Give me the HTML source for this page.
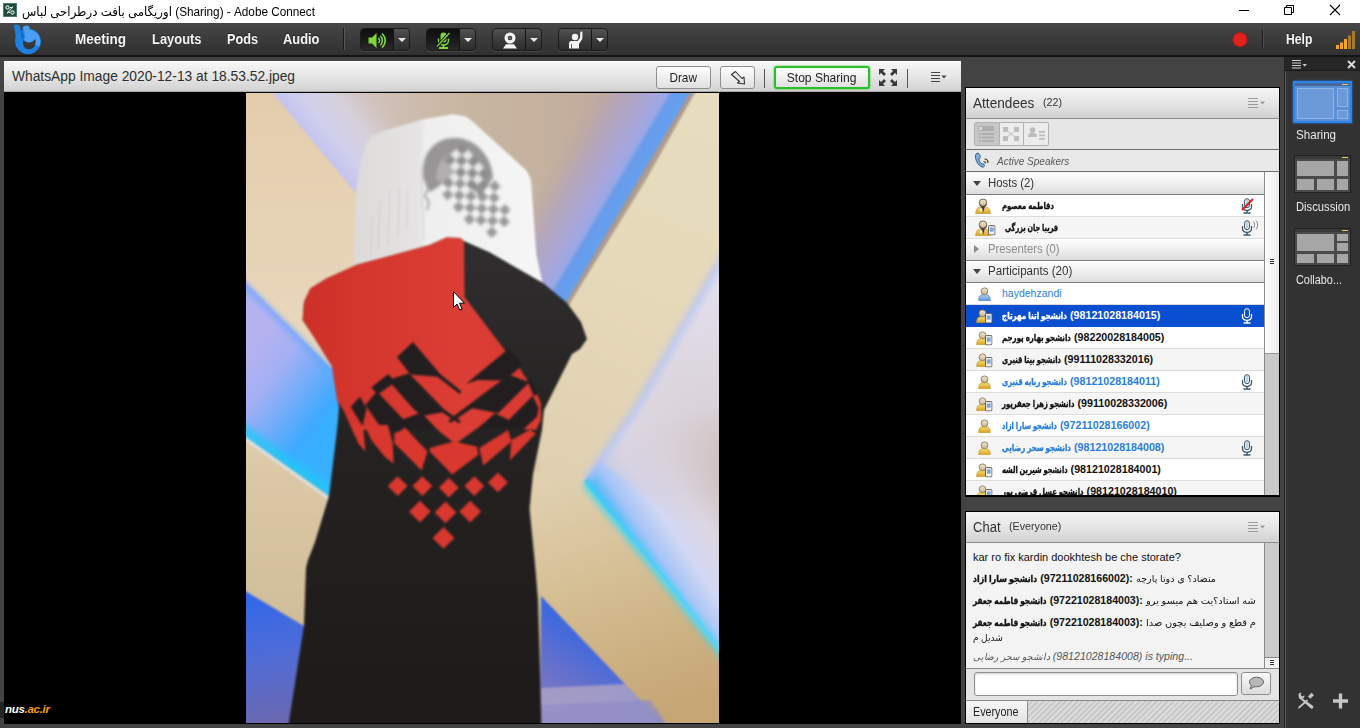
<!DOCTYPE html>
<html lang="fa">
<head>
<meta charset="utf-8">
<title>Adobe Connect</title>
<style>
*{box-sizing:border-box;margin:0;padding:0}
html,body{width:1360px;height:728px;overflow:hidden;background:#434343;font-family:"Liberation Sans","DejaVu Sans",sans-serif;}
.abs{position:absolute}
.sx{display:inline-block;transform-origin:0 50%;white-space:nowrap}
#titlebar{left:0;top:0;width:1360px;height:23px;background:#fff;}
#titlebar .t{left:22px;top:4px;font-size:12.5px;color:#000;white-space:nowrap;direction:ltr}
#menubar{left:0;top:23px;width:1360px;height:34px;background:linear-gradient(#474747,#3d3d3d 40%,#303030);border-bottom:2px solid #141414}
.menu{color:#f4f4f4;font-weight:bold;font-size:14px;top:31px;white-space:nowrap;text-shadow:0 -1px 0 rgba(0,0,0,.5)}
.tbtn{top:28px;height:23px;width:50px;border-radius:4px;background:linear-gradient(#525252,#3c3c3c 50%,#2d2d2d);border:1px solid #1b1b1b;box-shadow:0 1px 0 rgba(255,255,255,.10)}
.tbtn .l{left:0;top:0;width:33px;height:21px;border-right:1px solid #151515;border-radius:3px 0 0 3px}
.tbtn .l.on{background:linear-gradient(#0e0e0e,#1c1c1c 60%,#2a2a2a)}
.tbtn .arr{left:37px;top:9px;width:0;height:0;border-left:4px solid transparent;border-right:4px solid transparent;border-top:4.5px solid #e8e8e8}
#sharepod{left:4px;top:61px;width:957px;height:663px;background:#000;}
#sharehead{left:0;top:0;width:957px;height:31px;background:linear-gradient(#f7f7f7,#e6e6e6 50%,#d2d2d2);border-bottom:1px solid #a9a9a9;border-top:1px solid #fff}
#sharehead .ttl{left:8px;top:7px;font-size:13.8px;color:#2e2e2e;white-space:nowrap}
.btn{height:23px;top:4px;border:1px solid #8e8e8e;border-radius:3px;background:linear-gradient(#ffffff,#ececec 60%,#e0e0e0);font-size:13px;color:#222;text-align:center;line-height:21px}
.vsep{width:1px;background:#555;top:7px;height:19px}
.pod{background:#f2f2f2;border:1px solid #1e1e1e;overflow:hidden}
.podhead{left:0;top:0;width:100%;height:31px;background:linear-gradient(#f4f4f4,#e6e6e6 50%,#d0d0d0);border-bottom:1px solid #8c8c8c}
.podhead .pt{left:7px;top:7px;font-size:14px;color:#333;white-space:nowrap}
.podhead .pc{top:8px;font-size:11.5px;color:#333;white-space:nowrap}
.podmenu{top:9px;width:18px;height:12px}
.ghead{left:0;width:298px;height:22px;background:linear-gradient(#ffffff,#ededed 55%,#dcdcdc);border-bottom:1px solid #7d7d7d;font-size:12.5px;color:#333;padding:3px 0 0 22px;white-space:nowrap}
.ghead.dim{color:#8a8a8a}
.tri{position:absolute;left:7px;top:8px;width:0;height:0;border-left:4px solid transparent;border-right:4px solid transparent;border-top:5px solid #444}
.trir{position:absolute;left:8px;top:6px;width:0;height:0;border-top:4px solid transparent;border-bottom:4px solid transparent;border-left:5px solid #8a8a8a}
.row{left:0;width:298px;height:22px;background:#fff;border-bottom:1px solid #dcdcdc;font-size:10.5px;font-weight:bold;color:#111;white-space:nowrap}
.row.alt{background:#f5f5f5}
.row.sel{background:#0a4fd0;color:#fff;border-bottom-color:#0a4fd0}
.row.blue{color:#2a7fd8}
.row .nm{position:absolute;left:36px;top:4px;direction:ltr;unicode-bidi:normal}
.row svg.ic{position:absolute;left:12px;top:4px}
.row svg.ic.wp{left:10px}
.row svg.ph{position:absolute;left:19px;top:8px}
.row svg.mc{position:absolute;left:275px;top:3px}
#rightbar{left:1284px;top:57px;width:76px;height:671px;background:#323232;border-left:1px solid #222;box-shadow:inset 1px 0 0 #5a5a5a}
#rightbar .hd{left:0;top:0;width:75px;height:14px;background:#262626;border-bottom:1px solid #1b1b1b}
.lay{left:9px;width:57px;height:38px;border:1px solid #202020;background:#4a4a4a}
.lay i{position:absolute;background:#a6a6a6;display:block}
.laylbl{left:0;width:75px;text-align:center;color:#e8e8e8;font-size:12.5px;white-space:nowrap}
.chat{font-size:11.5px;color:#111;white-space:nowrap;left:7px}
.chat b{font-weight:bold}
.fa{display:inline-block;transform-origin:0 50%;white-space:nowrap;font-size:9.5px;vertical-align:baseline;overflow:visible}
.num{margin-left:3px}
.row .fa,.chat b .fa{-webkit-text-stroke:.35px currentColor}
.chat b+.fa{margin-left:3px}
.row .num{font-size:10.7px}
.chat .num{font-size:10.6px}
</style>
</head>
<body>
<svg width="0" height="0" style="position:absolute">
<defs>
<linearGradient id="gy" x1="0" y1="0" x2="0" y2="1"><stop offset="0" stop-color="#f7dc7a"/><stop offset="1" stop-color="#d9a520"/></linearGradient>
<linearGradient id="gh" x1="0" y1="0" x2="0" y2="1"><stop offset="0" stop-color="#f3ead6"/><stop offset="1" stop-color="#c9b48c"/></linearGradient>
<linearGradient id="gb" x1="0" y1="0" x2="0" y2="1"><stop offset="0" stop-color="#b7d2f2"/><stop offset="1" stop-color="#5f98dc"/></linearGradient>
<symbol id="iuser" viewBox="0 0 13 14"><path d="M.6,13.500 L1.200,9.800 C2,8.200 4,7.600 6.500,7.600 C9,7.600 11,8.200 11.800,9.800 L12.400,13.500 Z" fill="url(#gy)" stroke="#c8962a" stroke-width=".7"/><circle cx="6.500" cy="4.300" r="3.400" fill="url(#gh)" stroke="#8c7c60" stroke-width=".9"/></symbol>
<symbol id="iuserb" viewBox="0 0 13 14"><path d="M.6,13.500 L1.200,9.800 C2,8.200 4,7.600 6.500,7.600 C9,7.600 11,8.200 11.800,9.800 L12.400,13.500 Z" fill="url(#gb)" stroke="#4a80c8" stroke-width=".7"/><circle cx="6.500" cy="4.300" r="3.400" fill="url(#gh)" stroke="#8c7c60" stroke-width=".9"/></symbol>
<symbol id="ihost" viewBox="0 0 16 16"><path d="M.6,15.500 L1.400,11.500 C2.500,9.500 5,8.800 8,8.800 C11,8.800 13.500,9.500 14.600,11.500 L15.400,15.500 Z" fill="url(#gy)" stroke="#c8962a" stroke-width=".7"/><path d="M6.300,9 L8,15 L9.700,9 Z" fill="#3a3a3a"/><path d="M5,10.500 h2.500 v3 h-2.500 Z" fill="#fff" opacity=".7"/><circle cx="8" cy="4.800" r="3.800" fill="url(#gh)" stroke="#6c5c44" stroke-width=".9"/><path d="M4.600,5.500 Q8,10.500 11.400,5.500 L11.200,7.500 Q8,11.500 4.800,7.500 Z" fill="#4a4038"/></symbol>
<symbol id="iphone" viewBox="0 0 8 11"><rect x=".5" y=".5" width="7" height="10" rx="1.200" fill="#f0f0f0" stroke="#555" stroke-width="1"/><rect x="2" y="2.500" width="4" height="4.500" fill="#7aa6d8"/></symbol>
<symbol id="imic" viewBox="0 0 12 16"><rect x="3.500" y=".7" width="5" height="9" rx="2.500" fill="#dfe8ee" stroke="#3c5a6e" stroke-width="1"/><path d="M1.500,6 L1.500,8.500 C1.500,11.500 4,12.300 6,12.300 C8,12.300 10.500,11.500 10.500,8.500 L10.500,6" fill="none" stroke="#3c5a6e" stroke-width="1.300"/><path d="M6,12.300 L6,14.500 M2.500,15 L9.500,15" stroke="#3c5a6e" stroke-width="1.500" fill="none"/><path d="M5,3 L7,3 M5,5 L7,5 M5,7 L7,7" stroke="#8aa0ae" stroke-width=".7"/></symbol>
<symbol id="imicw" viewBox="0 0 12 16"><rect x="3.500" y=".7" width="5" height="9" rx="2.500" fill="#0a4fd0" stroke="#ffffff" stroke-width="1"/><path d="M1.500,6 L1.500,8.500 C1.500,11.500 4,12.300 6,12.300 C8,12.300 10.500,11.500 10.500,8.500 L10.500,6" fill="none" stroke="#ffffff" stroke-width="1.300"/><path d="M6,12.300 L6,14.500 M2.500,15 L9.500,15" stroke="#ffffff" stroke-width="1.500" fill="none"/></symbol>
<symbol id="ipodmenu" viewBox="0 0 18 12"><path d="M0,1.500 H10 M0,4.500 H10 M0,7.500 H10 M0,10.500 H10" stroke="#9a9a9a" stroke-width="1.200"/><path d="M12,4.500 L17,4.500 L14.500,7.500 Z" fill="#9a9a9a"/></symbol>
</defs>
</svg>

<div id="titlebar" class="abs">
  <svg class="abs" style="left:3px;top:3px" width="14" height="14" viewBox="0 0 14 14"><rect width="14" height="14" fill="#1e4b3d"/><rect x=".5" y=".5" width="13" height="13" fill="none" stroke="#4d7a69" stroke-width="1"/><circle cx="4.500" cy="4.500" r="1.600" fill="none" stroke="#cfe6dc" stroke-width="1.100"/><circle cx="9.500" cy="9.500" r="1.600" fill="none" stroke="#cfe6dc" stroke-width="1.100"/><path d="M10,3.500 L4,10.500 M6.500,4.500 H10 M4,9.500 H7" stroke="#cfe6dc" stroke-width="1.100" fill="none"/></svg>
  <div class="abs t"><span class="sx" id="ttxt" style="transform:scaleX(0.94)">اوریگامی بافت درطراحی لباس (Sharing) - Adobe Connect</span></div>
  <svg class="abs" style="left:1230px;top:0" width="130" height="23" viewBox="1230 0 130 23"><path d="M1239,10.500 H1249" stroke="#000" stroke-width="1"/><path d="M1284.500,7.500 H1291.500 V14.500 H1284.500 Z M1286.500,7.500 V5.500 H1293.500 V12.500 H1291.500" fill="none" stroke="#000" stroke-width="1"/><path d="M1330,5 L1340,15 M1340,5 L1330,15" stroke="#000" stroke-width="1.100"/></svg>
</div>
<div id="menubar" class="abs"></div>
<svg class="abs" style="left:10px;top:23px" width="36" height="33" viewBox="10 23 36 33">
  <path d="M13.500,25.500 C16,24.300 19,24.800 20.200,26.800 L21,36 L15.500,41 C15.800,35 15.300,30 13.500,25.500 Z" fill="#1f7fe2"/>
  <path fill-rule="evenodd" d="M28,28.500 a12.900,12.900 0 1 0 0.010,0 Z M23.500,39.500 C26,43.500 32,43.500 35.200,38.800 C37,43 35,48.800 29.500,49.200 C24.500,49.500 22,44.500 23.500,39.500 Z" fill="#1f7fe2"/>
  <path d="M22.500,28 C23.500,25.300 27.500,24.500 29.200,26.600 C29.800,27.500 29.600,28.600 29.100,29.400 C35,30 40,34.500 40.300,41 C40.400,43 40,45 39.300,46.500 L34.800,44.500 C36,42.500 36,40.500 35.200,38.800 C32,43.200 26.500,43.500 23.500,39.500 C25.500,36 25,31.500 22.500,28 Z" fill="#4a9ef4"/>
  <path d="M20.200,26.800 L25,38 L23.500,39.500 C22,38.500 21.200,37.300 21,36 Z" fill="#1766c2" opacity=".85"/>
</svg>
<div class="abs menu" style="left:75px"><span class="sx" id="m1" style="transform:scaleX(0.964)">Meeting</span></div>
<div class="abs menu" style="left:152px"><span class="sx" id="m2" style="transform:scaleX(0.922)">Layouts</span></div>
<div class="abs menu" style="left:227px"><span class="sx" id="m3" style="transform:scaleX(0.906)">Pods</span></div>
<div class="abs menu" style="left:283px"><span class="sx" id="m4" style="transform:scaleX(0.92)">Audio</span></div>
<div class="abs" style="left:343px;top:28px;width:1px;height:22px;background:#1a1a1a"></div>
<div class="abs" style="left:344px;top:28px;width:1px;height:22px;background:#555"></div>

<div class="abs tbtn" style="left:360px"><div class="abs l on"></div><div class="abs arr"></div>
  <svg class="abs" style="left:7px;top:3px" width="19" height="17" viewBox="0 0 19 17"><path d="M0.500,5.500 H4 L8.500,1 V16 L4,11.500 H0.500 Z" fill="#7ed63c"/><path d="M10.500,6 C11.800,7.500 11.800,9.500 10.500,11" stroke="#7ed63c" stroke-width="1.500" fill="none"/><path d="M12.300,3.800 C15,6.500 15,10.500 12.300,13.200" stroke="#7ed63c" stroke-width="1.600" fill="none"/><path d="M14,1.500 C18.300,5.500 18.300,11.500 14,15.500" stroke="#7ed63c" stroke-width="1.600" fill="none"/></svg>
</div>
<div class="abs tbtn" style="left:426px"><div class="abs l on"></div><div class="abs arr"></div>
  <svg class="abs" style="left:9px;top:3px" width="15" height="17" viewBox="0 0 15 17"><rect x="4.500" y=".5" width="6" height="10" rx="3" fill="#7ed63c"/><path d="M2.500,6.500 V8.500 C2.500,11.500 5,13 7.500,13 C10,13 12.500,11.500 12.500,8.500 V6.500" stroke="#7ed63c" stroke-width="1.400" fill="none"/><path d="M7.500,13 V15 M3,16 H12 " stroke="#7ed63c" stroke-width="1.800" fill="none"/><path d="M1,14.500 L13.500,1" stroke="#161616" stroke-width="3.200"/><path d="M1,14.500 L13.500,1" stroke="#7ed63c" stroke-width="1.300"/></svg>
</div>
<div class="abs tbtn" style="left:492px"><div class="abs l"></div><div class="abs arr"></div>
  <svg class="abs" style="left:9px;top:3px" width="16" height="17" viewBox="0 0 16 17"><circle cx="8" cy="6" r="5.500" fill="#f4f4f4"/><circle cx="8" cy="6" r="2.300" fill="#3a3a3a"/><circle cx="8" cy="6" r="1" fill="#888"/><path d="M4,12.300 H12 L15,16.500 H1 Z" fill="#f4f4f4"/></svg>
</div>
<div class="abs tbtn" style="left:558px"><div class="abs l"></div><div class="abs arr"></div>
  <svg class="abs" style="left:9px;top:2px" width="16" height="18" viewBox="0 0 16 18"><circle cx="7" cy="6" r="3.200" fill="#f4f4f4"/><path d="M1,17.500 V12.500 C1,10.500 2.500,10 4,10 H9.500 L12,7 L12.300,1.500 C12.300,.3 14.500,.3 14.500,1.500 L14.300,8 L11,13 V17.500 Z" fill="#f4f4f4"/><path d="M3.500,13 V17.500" stroke="#3a3a3a" stroke-width=".8"/></svg>
</div>

<svg class="abs" style="left:1230px;top:26px" width="130" height="28" viewBox="1230 26 130 28">
  <circle cx="1240" cy="39.700" r="7.200" fill="#e0221f"/><circle cx="1240" cy="39.700" r="7.200" fill="none" stroke="#a01414" stroke-width=".8"/>
  <path d="M1262.500,30 V49" stroke="#1c1c1c" stroke-width="1"/><path d="M1263.500,30 V49" stroke="#4d4d4d" stroke-width="1"/>
  <rect x="1336" y="45" width="3" height="4" fill="#f5a623"/><rect x="1340" y="42.500" width="3" height="6.500" fill="#f5a623"/><rect x="1344" y="39" width="3" height="10" fill="#f5a623"/><rect x="1348" y="35.500" width="3" height="13.500" fill="#a97a2e"/><rect x="1352" y="31" width="3" height="18" fill="#a97a2e"/>
</svg>
<div class="abs menu" style="left:1286px"><span class="sx" id="m5" style="transform:scaleX(0.868)">Help</span></div>

<div id="sharepod" class="abs">
  <div id="sharehead" class="abs">
    <div class="abs ttl"><span class="sx" id="sttl">WhatsApp Image 2020-12-13 at 18.53.52.jpeg</span></div>
    <div class="abs btn" style="left:652px;width:55px"><span class="sx" id="bdraw" style="transform-origin:50% 50%;transform:scaleX(0.907)">Draw</span></div>
    <div class="abs btn" style="left:716px;width:35px"><svg width="18" height="16" viewBox="0 0 18 16" style="margin-top:3px"><path d="M2.500,4.500 L6.500,1.500 L13,8.500 L15,7 L15.500,14 L8.500,13 L10.500,11.500 Z" fill="#e8e8e8" stroke="#333" stroke-width="1.100" stroke-linejoin="round"/></svg></div>
    <div class="abs vsep" style="left:760px"></div>
    <div class="abs btn" style="left:770px;width:96px;border:2px solid #27c227;line-height:19px;box-shadow:0 0 2px #27c227"><span class="sx" id="bstop" style="transform-origin:50% 50%;transform:scaleX(0.927)">Stop Sharing</span></div>
    <svg class="abs" style="left:875px;top:7px" width="18" height="17" viewBox="0 0 18 17"><g fill="#3a3a3a"><path d="M0,0 H6 L4,2 L7,5 L5,7 L2,4 L0,6 Z"/><path d="M18,0 V6 L16,4 L13,7 L11,5 L14,2 L12,0 Z"/><path d="M0,17 V11 L2,13 L5,10 L7,12 L4,15 L6,17 Z"/><path d="M18,17 H12 L14,15 L11,12 L13,10 L16,13 L18,11 Z"/></g></svg>
    <div class="abs vsep" style="left:903px"></div>
    <svg class="abs" style="left:927px;top:9px" width="16" height="12" viewBox="0 0 16 12"><path d="M0,1.500 H9 M0,4.500 H9 M0,7.500 H9 M0,10.500 H9" stroke="#444" stroke-width="1.200"/><path d="M10.500,4.500 L15.500,4.500 L13,7.500 Z" fill="#444"/></svg>
  </div>
  <div class="abs" style="left:1px;top:642px;font-size:11.5px;font-weight:bold;font-style:italic;color:#fff;letter-spacing:-.3px;white-space:nowrap">nus<span style="color:#f59a1a">.ac.ir</span></div>
</div>
<div class="abs" style="left:0;top:702px;width:4px;height:16px;background:#242424"></div>
<svg class="abs" id="photo" style="left:246px;top:93px" width="473" height="630" viewBox="246 93 473 630">
<defs>
<filter id="b1" color-interpolation-filters="sRGB" x="-5%" y="-5%" width="110%" height="110%"><feGaussianBlur stdDeviation="0.9"/></filter>
<filter id="b3" color-interpolation-filters="sRGB" x="-20%" y="-20%" width="140%" height="140%"><feGaussianBlur stdDeviation="3"/></filter>
<filter id="b6" color-interpolation-filters="sRGB" x="-30%" y="-30%" width="160%" height="160%"><feGaussianBlur stdDeviation="6"/></filter>
<filter id="b12" color-interpolation-filters="sRGB" x="-40%" y="-40%" width="180%" height="180%"><feGaussianBlur stdDeviation="12"/></filter>
<linearGradient id="gTop" gradientUnits="userSpaceOnUse" x1="300" y1="93" x2="700" y2="93">
 <stop offset="0" stop-color="#d4c8c8"/><stop offset=".2" stop-color="#d0c0b8"/><stop offset=".4" stop-color="#c9b7a1"/><stop offset=".65" stop-color="#c4b09e"/><stop offset=".78" stop-color="#c0a8a0"/><stop offset="1" stop-color="#b8a4a0"/>
</linearGradient>
<linearGradient id="gBand" gradientUnits="userSpaceOnUse" x1="548.6" y1="122.4" x2="645.8" y2="180">
 <stop offset="0.2" stop-color="#b8a4a8" stop-opacity="0"/><stop offset=".45" stop-color="#b0a4c4" stop-opacity=".75"/><stop offset=".68" stop-color="#a8a6dc"/><stop offset=".775" stop-color="#9aa8e6"/><stop offset=".81" stop-color="#6a9aea"/><stop offset=".935" stop-color="#64a0f0"/><stop offset=".95" stop-color="#a8978c"/><stop offset="1" stop-color="#b4a494"/>
</linearGradient>
<linearGradient id="gLav" gradientUnits="userSpaceOnUse" x1="316" y1="145" x2="377.6" y2="93.9">
 <stop offset="0" stop-color="#c2c4ee"/><stop offset=".25" stop-color="#d0d0ee" stop-opacity=".97"/><stop offset=".6" stop-color="#d8d4e4" stop-opacity=".75"/><stop offset="1" stop-color="#d4c8c8" stop-opacity="0"/>
</linearGradient>
<linearGradient id="gBlueL" gradientUnits="userSpaceOnUse" x1="250" y1="350" x2="338" y2="420">
 <stop offset="0" stop-color="#b6b2f0"/><stop offset=".3" stop-color="#a4b0f4"/><stop offset=".6" stop-color="#6eacfa"/><stop offset=".85" stop-color="#3eaaff"/><stop offset="1" stop-color="#38b0ff"/>
</linearGradient>
<linearGradient id="gBlueL2" gradientUnits="userSpaceOnUse" x1="246" y1="600" x2="270" y2="723">
 <stop offset="0" stop-color="#3468e8"/><stop offset=".45" stop-color="#4e6cd8"/><stop offset="1" stop-color="#6a68b0"/>
</linearGradient>
<linearGradient id="gPanel" gradientUnits="userSpaceOnUse" x1="600" y1="520" x2="719" y2="440">
 <stop offset="0" stop-color="#30d0f4"/><stop offset=".08" stop-color="#4cb4f6"/><stop offset=".2" stop-color="#a4c4f6"/><stop offset=".38" stop-color="#d4d8f4"/><stop offset=".6" stop-color="#dcd6e2"/><stop offset=".85" stop-color="#cfc0bc"/><stop offset="1" stop-color="#c8b4a6"/>
</linearGradient>
<linearGradient id="gPanelTop" gradientUnits="userSpaceOnUse" x1="670" y1="300" x2="719" y2="520">
 <stop offset="0" stop-color="#e2deea"/><stop offset=".5" stop-color="#dcd6e0" stop-opacity=".9"/><stop offset="1" stop-color="#d0c4c8" stop-opacity="0"/>
</linearGradient>
<linearGradient id="gTan" gradientUnits="userSpaceOnUse" x1="560" y1="480" x2="640" y2="720">
 <stop offset="0" stop-color="#e0d0b0"/><stop offset=".4" stop-color="#d6c096"/><stop offset="1" stop-color="#c6a675"/>
</linearGradient>
<linearGradient id="gBlueR" gradientUnits="userSpaceOnUse" x1="600" y1="640" x2="545" y2="723">
 <stop offset="0" stop-color="#3a68e0"/><stop offset=".4" stop-color="#5f6fd0"/><stop offset="1" stop-color="#8a7cb8"/>
</linearGradient>
<linearGradient id="gPaper" gradientUnits="userSpaceOnUse" x1="355" y1="200" x2="540" y2="200">
 <stop offset="0" stop-color="#dddad9"/><stop offset=".35" stop-color="#e6e4e4"/><stop offset=".38" stop-color="#efefef"/><stop offset="1" stop-color="#f6f6f6"/>
</linearGradient>
<linearGradient id="gLeftWall" gradientUnits="userSpaceOnUse" x1="246" y1="93" x2="246" y2="723">
 <stop offset="0" stop-color="#e4cdae"/><stop offset=".45" stop-color="#ead9be"/><stop offset=".6" stop-color="#dcc8a6"/><stop offset="1" stop-color="#c9b690"/>
</linearGradient>
<linearGradient id="gRightWall" gradientUnits="userSpaceOnUse" x1="719" y1="93" x2="560" y2="480">
 <stop offset="0" stop-color="#e7debf"/><stop offset=".5" stop-color="#e6d9ba"/><stop offset="1" stop-color="#e0d0b2"/>
</linearGradient>
<linearGradient id="gDress" gradientUnits="userSpaceOnUse" x1="420" y1="240" x2="420" y2="723">
 <stop offset="0" stop-color="#302e2e"/><stop offset=".4" stop-color="#252222"/><stop offset="1" stop-color="#1e1a1a"/>
</linearGradient>
<linearGradient id="gRed" gradientUnits="userSpaceOnUse" x1="300" y1="330" x2="520" y2="330">
 <stop offset="0" stop-color="#cc3028"/><stop offset=".25" stop-color="#d4352c"/><stop offset=".75" stop-color="#dc3e35"/><stop offset="1" stop-color="#d93a31"/>
</linearGradient>
</defs>
<g filter="url(#b1)">
<rect x="240" y="88" width="485" height="640" fill="url(#gLeftWall)"/>
<polygon points="560,88 725,88 725,728 540,728 540,300" fill="url(#gRightWall)" />
<polygon points="268.5,88 272.9,93 359.8,197.7 380,320 560,320 574.6,295.4 645.8,180 694.7,93 697.5,88" fill="url(#gTop)" />
<polygon points="268.5,88 272.9,93 359.8,197.7 380,320 480,320 480,88" fill="url(#gLav)" />
<polygon points="480,88 697.5,88 694.7,93 645.8,180 574.6,295.4 560,320 480,320" fill="url(#gBand)" />
<polygon points="240,276 338,375 345,400 332,500 240,433" fill="url(#gBlueL)" />
<polyline points="238,427 332,494" stroke="#22c8f4" stroke-width="12" fill="none" opacity=".8" filter="url(#b3)"/>
<polyline points="238,279 338,377" stroke="#5aa4ff" stroke-width="5" fill="none" opacity=".8" filter="url(#b3)"/>
<polygon points="240,433 332,498 332,520 240,450" fill="url(#gLeftWall)" />
<polyline points="240,435 330,499.5" stroke="#dce8f2" stroke-width="2.5" fill="none" opacity=".85"/>
<polygon points="240,588 304,626 290,728 240,728" fill="url(#gBlueL2)" />
<polygon points="530,470 584,482 725,660 725,728 540,728" fill="url(#gTan)" />
<polygon points="725,252 635,410 584,482 656,570 725,658" fill="url(#gPanel)" />
<polygon points="725,252 635,410 600,460 725,560" fill="url(#gPanelTop)" />
<polyline points="727,250 635,410 586,480" stroke="#b4c4f6" stroke-width="8" fill="none" opacity=".75" filter="url(#b3)"/>
<polyline points="585,483 656,570 727,660" stroke="#38d8f4" stroke-width="7" fill="none" opacity=".9" filter="url(#b3)"/>
<polygon points="541,596 664,725 540,728" fill="url(#gBlueR)" />
<polygon points="541,688 625,684 648,708 664,728 541,728" fill="#aaa2c6" opacity=".85"/>
<polygon points="541,705 650,700 670,728 541,728" fill="#8f8cc8" opacity=".7"/>
<polygon points="356.2,191.5 360,165 365.4,144 372,136 381,131.8 422,119.4 453,114.3 465.3,116.3 472,121 527,171 531,180 536.4,255 544,290 470,300 352,290 354,249" fill="url(#gPaper)" />
<g filter="url(#b1)">
<path d="M423,177 C421,150 438,137 456,138 C476,139 492,156 493,178 L480,196 L462,180 L440,186 L430,192 Z" fill="#8f8d8d" opacity=".92"/>
<path d="M436,180 C436,162 446,152 458,152 C468,152 476,160 478,172 L462,180 L446,184 Z" fill="#b4b1b1" opacity=".9"/>
<path d="M424,178 l4,10 l-3,8 l4,6 l-2,8" stroke="#a5a2a2" stroke-width="2" fill="none"/>
<polygon points="444.2,159.6 449.6,165.8 455.8,160.4 450.4,154.2" fill="#8b8989" opacity=".85"/>
<polygon points="450.4,154.2 455.8,160.4 461.9,155 456.5,148.8" fill="#efefef" opacity=".9"/>
<polygon points="456.5,148.8 461.9,155 468.1,149.5 462.7,143.4" fill="#8b8989" opacity=".85"/>
<polygon points="449.6,165.8 455,171.9 461.2,166.5 455.8,160.4" fill="#efefef" opacity=".9"/>
<polygon points="455.8,160.4 461.2,166.5 467.3,161.1 461.9,155" fill="#8b8989" opacity=".85"/>
<polygon points="461.9,155 467.3,161.1 473.5,155.7 468.1,149.5" fill="#efefef" opacity=".9"/>
<polygon points="436.6,188.2 442,194.3 448.2,188.9 442.7,182.8" fill="#efefef" opacity=".9"/>
<polygon points="442.7,182.8 448.2,188.9 454.3,183.5 448.9,177.3" fill="#8b8989" opacity=".85"/>
<polygon points="448.9,177.3 454.3,183.5 460.5,178.1 455,171.9" fill="#efefef" opacity=".9"/>
<polygon points="455,171.9 460.5,178.1 466.6,172.7 461.2,166.5" fill="#8b8989" opacity=".85"/>
<polygon points="461.2,166.5 466.6,172.7 472.8,167.3 467.3,161.1" fill="#efefef" opacity=".9"/>
<polygon points="467.3,161.1 472.8,167.3 478.9,161.8 473.5,155.7" fill="#8b8989" opacity=".85"/>
<polygon points="442,194.3 447.4,200.5 453.6,195.1 448.2,188.9" fill="#8b8989" opacity=".85"/>
<polygon points="448.2,188.9 453.6,195.1 459.7,189.6 454.3,183.5" fill="#efefef" opacity=".9"/>
<polygon points="454.3,183.5 459.7,189.6 465.9,184.2 460.5,178.1" fill="#8b8989" opacity=".85"/>
<polygon points="460.5,178.1 465.9,184.2 472,178.8 466.6,172.7" fill="#efefef" opacity=".9"/>
<polygon points="466.6,172.7 472,178.8 478.2,173.4 472.8,167.3" fill="#8b8989" opacity=".85"/>
<polygon points="472.8,167.3 478.2,173.4 484.3,168 478.9,161.8" fill="#efefef" opacity=".9"/>
<polygon points="447.4,200.5 452.8,206.6 459,201.2 453.6,195.1" fill="#efefef" opacity=".9"/>
<polygon points="453.6,195.1 459,201.2 465.1,195.8 459.7,189.6" fill="#8b8989" opacity=".85"/>
<polygon points="459.7,189.6 465.1,195.8 471.3,190.4 465.9,184.2" fill="#efefef" opacity=".9"/>
<polygon points="465.9,184.2 471.3,190.4 477.4,185 472,178.8" fill="#8b8989" opacity=".85"/>
<polygon points="472,178.8 477.4,185 483.6,179.6 478.2,173.4" fill="#efefef" opacity=".9"/>
<polygon points="478.2,173.4 483.6,179.6 489.7,174.1 484.3,168" fill="#8b8989" opacity=".85"/>
<polygon points="452.8,206.6 458.2,212.8 464.4,207.4 459,201.2" fill="#8b8989" opacity=".85"/>
<polygon points="465.1,195.8 470.5,201.9 476.7,196.5 471.3,190.4" fill="#8b8989" opacity=".85"/>
<polygon points="477.4,185 482.8,191.1 489,185.7 483.6,179.6" fill="#8b8989" opacity=".85"/>
<polygon points="464.4,207.4 469.8,213.5 476,208.1 470.5,201.9" fill="#8b8989" opacity=".85"/>
<polygon points="476.7,196.5 482.1,202.7 488.3,197.3 482.8,191.1" fill="#8b8989" opacity=".85"/>
<polygon points="489,185.7 494.4,191.9 500.6,186.4 495.1,180.3" fill="#8b8989" opacity=".85"/>
<polygon points="463.7,218.9 469.1,225.1 475.2,219.7 469.8,213.5" fill="#8b8989" opacity=".85"/>
<polygon points="476,208.1 481.4,214.2 487.5,208.8 482.1,202.7" fill="#8b8989" opacity=".85"/>
<polygon points="488.3,197.3 493.7,203.4 499.8,198 494.4,191.9" fill="#8b8989" opacity=".85"/>
<polygon points="475.2,219.7 480.6,225.8 486.8,220.4 481.4,214.2" fill="#8b8989" opacity=".85"/>
<polygon points="487.5,208.8 492.9,215 499.1,209.6 493.7,203.4" fill="#8b8989" opacity=".85"/>
<polygon points="486.8,220.4 492.2,226.5 498.3,221.1 492.9,215" fill="#8b8989" opacity=".85"/>
<polygon points="499.1,209.6 504.5,215.7 510.6,210.3 505.2,204.2" fill="#8b8989" opacity=".85"/>
<polygon points="486,232 491.5,238.1 497.6,232.7 492.2,226.5" fill="#8b8989" opacity=".85"/>
<polygon points="498.3,221.1 503.8,227.3 509.9,221.9 504.5,215.7" fill="#8b8989" opacity=".85"/>
</g>
<g stroke="#cbc8c8" stroke-width="1" fill="none" opacity=".8"><path d="M421,168 L424,240"/><path d="M380,200 L378,250 M390,190 L388,245 M399,186 L398,238 M407,190 L407,230 M372,215 L371,255"/></g>
<polygon points="464,241 490,252.6 543,283 567,303 581,322 587,339 580,349 572,354 557,384 544,410 542,430 533,474 529.5,509 535,564 538,600 541.5,728 288,728 304,625 306,568 308,560 315,542 329,496 337,430 339,408 332,366 312,334 302.6,320 304,302 310.3,288.5 326,278.7 357,264.7 393.4,255 429.7,245 446.5,237.5 460.4,238" fill="url(#gDress)" />
<polygon points="446.5,237.5 460.4,238 464,242 464.5,297 506.6,352.4 518.3,366.1 527.9,381.2 536.8,392.9 540.9,403.2 541,420 536,430 524,440 500,462 478,470 452,476 430,470 405,462 375,440 356.5,440 344.1,411.4 337,400 332,366 312,334 302.6,320 304,302 310.3,288.5 326,278.7 357,264.7 393.4,255 429.7,245" fill="url(#gRed)" />
<polygon points="397,357 412.9,342 440.6,374.6 461.4,391.3 459.8,393.9 437.2,376.7 410.3,374.6" fill="#221e1f" />
<polygon points="371.5,387.2 388.4,374.1 395.1,382.2 377.4,394.7" fill="#221e1f" />
<polygon points="388,380 409,373.3 444.2,409.4 460.5,420.7 459.3,423.8 442.2,412.2 422.4,416 414,409.4" fill="#221e1f" />
<polygon points="365.3,405.1 377,391.6 407.3,423.5 393.8,440.2 380.4,426.8" fill="#221e1f" />
<polygon points="350.7,406.8 359.9,396.7 366.6,408.5 362.5,426.1" fill="#221e1f" />
<polygon points="399.2,420.8 421.1,412.4 447.9,440.6 457.2,455.2 430.4,455.2 414.4,440.6" fill="#221e1f" />
<polygon points="362.6,428.9 373.2,442.8 363.5,442.8" fill="#221e1f" />
<polygon points="465.9,384 508.6,348.7 522.9,364.7 509.4,376.4 501,380.6 477.6,380.1" fill="#221e1f" />
<polygon points="472.2,408.3 449.9,423.2 448.7,420.1 479.2,397 509.1,374.8 529.2,382.3 498.2,413.3" fill="#221e1f" />
<polygon points="503.5,425.2 532.8,395.8 538.6,408.4 536.9,416.8 511.8,440.2" fill="#221e1f" />
<polygon points="526.9,379.9 533.6,395.8 537.8,394.2 530.7,378.4" fill="#221e1f" />
<polygon points="462.9,441.4 473.9,431.6 495,413.2 512.1,421.6 491,441.4 478.8,453.6" fill="#221e1f" />
<polygon points="349.9,439.9 364.7,430 409.2,430 435.6,428.4 455.4,444 476.8,428.4 508.1,428.4 537.8,430 537.8,443.2 521.3,471.2 445.5,552 386.2,479.4" fill="url(#gDress)" />
<polygon points="352.4,426.7 363.1,426.7 365.5,451.4 358.1,443.2" fill="#d8382e" />
<polygon points="364.7,425.1 387.8,425.1 392.7,443.2 393.6,463.8 384.5,456.4 371.3,439.9" fill="#d8382e" />
<polygon points="394.4,433.3 405.9,428.4 427.4,451.4 421.6,470.4 394.4,443.2" fill="#d8382e" />
<polygon points="429.8,448.1 453.7,441.5 476.8,446.5 478.5,454.7 452.1,474.5 429.8,451.4" fill="#d8382e" />
<polygon points="479.3,448.1 508.1,430 511.4,441.5 483.4,465.4" fill="#d8382e" />
<polygon points="511.4,439.9 529.6,430 536.1,433.3 509.8,460.5" fill="#d8382e" />
<polygon points="397.7,476.2 407.6,486 397.7,495.9 387.8,486" fill="#d8382e" />
<polygon points="422.4,476.2 432.3,486 422.4,495.9 412.5,486" fill="#d8382e" />
<polygon points="448.8,477.8 458.7,487.7 448.8,497.6 438.9,487.7" fill="#d8382e" />
<polygon points="474.3,476.2 484.2,486 474.3,495.9 464.4,486" fill="#d8382e" />
<polygon points="497.9,472.5 507.8,482.4 497.9,492.3 488,482.4" fill="#d8382e" />
<polygon points="419.9,500.7 430.8,511.6 419.9,522.5 409.1,511.6" fill="#d8382e" />
<polygon points="445.5,501.5 456.4,512.4 445.5,523.3 434.6,512.4" fill="#d8382e" />
<polygon points="470.2,500.7 481.1,511.6 470.2,522.5 459.3,511.6" fill="#d8382e" />
<polygon points="443.5,527.1 454.4,538 443.5,548.8 432.6,538" fill="#d8382e" />
</g>
<path d="M453.5,291.5 l0,16 l3.6,-3.4 l2.6,6 l2.4,-1 l-2.6,-5.9 l5,0 z" fill="#fff" stroke="#000" stroke-width="1"/>
</svg>
<div class="abs" style="left:965px;top:87px;width:315px;height:409.500px;background:#000"></div>
<div id="attpod" class="abs pod" style="left:966px;top:88px;width:313px;height:407px;border:none">
  <div class="abs podhead"><div class="abs pt"><span class="sx" id="att1" style="transform:scaleX(.973)">Attendees</span></div><div class="abs pc" style="left:77px"><span class="sx" id="att2" style="transform:scaleX(0.93)">(22)</span></div>
    <svg class="abs podmenu" style="left:282px"><use href="#ipodmenu"/></svg></div>
  <div class="abs" style="left:0;top:31px;width:313px;height:31px;background:#e6e6e6;border-bottom:1px solid #6e6e6e"></div>
  <div class="abs" style="left:8px;top:34px;width:75px;height:24px;border:1px solid #b2b2b2;border-radius:2px;background:#ececec"></div>
  <div class="abs" style="left:9px;top:35px;width:24px;height:22px;background:#c6c6c6"></div>
  <div class="abs" style="left:33px;top:35px;width:1px;height:22px;background:#b2b2b2"></div>
  <div class="abs" style="left:57px;top:35px;width:1px;height:22px;background:#b2b2b2"></div>
  <svg class="abs" style="left:12px;top:38px" width="70" height="16" viewBox="0 0 70 16"><g fill="#aeaeae"><rect x="0" y="0" width="16" height="5"/><rect x="1" y="7" width="2" height="2"/><rect x="4" y="7" width="12" height="2"/><rect x="1" y="10.500" width="2" height="2"/><rect x="4" y="10.500" width="12" height="2"/><rect x="1" y="14" width="2" height="2"/><rect x="4" y="14" width="12" height="2"/></g><rect x="1" y="1" width="3" height="3" fill="#dcdcdc"/>
  <g fill="#bdbdbd"><rect x="25" y="1" width="5" height="5"/><rect x="36" y="1" width="5" height="5"/><rect x="25" y="10" width="5" height="5"/><rect x="36" y="10" width="5" height="5"/></g><path d="M29,5 L37,11 M37,5 L29,11" stroke="#cfcfcf" stroke-width="1.300"/>
  <g fill="#bdbdbd"><circle cx="54.500" cy="4" r="2.800"/><path d="M50,11 C50,7.500 52,6.500 54.500,6.500 C57,6.500 59,7.500 59,11 Z"/><rect x="61" y="5" width="6" height="1.800"/><rect x="61" y="8.500" width="6" height="1.800"/><rect x="61" y="12" width="6" height="1.800"/></g></svg>
  <div class="abs" style="left:0;top:62px;width:313px;height:22px;background:#e8e8e8;border-bottom:1px solid #6e6e6e"></div>
  <svg class="abs" style="left:8px;top:64px" width="17" height="18" viewBox="0 0 17 18"><path d="M2.500,1.500 C1,3 1,7 3.500,11 C5.500,14 8,15.500 9.500,15 C10.800,14.500 10.500,13 9.500,12 C8.500,11.200 7.500,12.300 6.500,11 C5,9 4.500,7 5.500,6 C6.500,5.200 6.500,4.200 5.500,2.500 C4.800,1.200 3.500,.8 2.500,1.500 Z" fill="#7fb2dc" stroke="#2c5a84" stroke-width="1"/><path d="M9.500,9.500 C10.800,9.500 11.500,10.300 11.500,11.500" stroke="#333" stroke-width="1.200" fill="none"/><path d="M10.500,7 C12.800,7 14,8.500 14,11" stroke="#333" stroke-width="1.200" fill="none"/></svg>
  <div class="abs" style="left:31px;top:67px;font-size:11.500px;font-style:italic;color:#5a5a5a;white-space:nowrap"><span class="sx" id="actsp" style="transform:scaleX(0.871)">Active Speakers</span></div>
  <div class="abs" id="list" style="left:0;top:85px;width:298px;height:322px;overflow:hidden;background:#fff">
    <div class="abs ghead" style="top:0"><i class="tri"></i><span class="sx" id="gh1" style="transform:scaleX(0.91)">Hosts (2)</span></div>
    <div class="abs row" style="top:22px"><svg class="ic" width="16" height="16" style="left:9px;top:3px"><use href="#ihost"/></svg><span class="nm"><span class="fa" id="h1" style="width:52px;transform:scaleX(0.723)">دفاطمه معصوم</span></span><svg class="mc" width="12" height="16"><use href="#imic"/></svg><svg class="mc" width="13" height="13" style="top:3px"><path d="M1,12 L12,1" stroke="#e01818" stroke-width="2"/></svg></div>
    <div class="abs row alt" style="top:44px"><svg class="ic" width="16" height="16" style="left:9px;top:3px"><use href="#ihost"/></svg><svg class="ph" width="7.500" height="10.500" style="left:22px"><use href="#iphone"/></svg><span class="nm" style="left:39px"><span class="fa" id="h2" style="width:53px;transform:scaleX(0.688)">فریبا جان بزرگی</span></span><svg class="mc" width="12" height="16"><use href="#imic"/></svg><svg class="mc" width="6" height="10" style="left:287px;top:3px"><path d="M.5,1.500 C2,3.500 2,6 .5,8 M3,.5 C5.200,3.500 5.200,6.500 3,9.500" stroke="#667" stroke-width=".8" fill="none"/></svg></div>
    <div class="abs ghead dim" style="top:66px"><i class="trir"></i><span class="sx" id="gh2" style="transform:scaleX(0.904)">Presenters (0)</span></div>
    <div class="abs ghead" style="top:88px"><i class="tri"></i><span class="sx" id="gh3" style="transform:scaleX(0.926)">Participants (20)</span></div>
    <div class="abs row blue" style="top:110px;font-weight:normal;font-size:10.5px"><svg class="ic" width="13" height="14"><use href="#iuserb"/></svg><span class="nm" style="top:4px;letter-spacing:0" id="hay">haydehzandi</span></div>
    <div class="abs row sel" style="top:132px"><svg class="ic wp" width="13" height="14"><use href="#iuser"/></svg><svg class="ph" width="7.500" height="10.500"><use href="#iphone"/></svg><span class="nm"><span class="fa" id="n1" style="width:65px;transform:scaleX(0.758)">دانشجو اتنا مهرتاج</span>&lrm;<span class="num">(98121028184015)</span></span><svg class="mc" width="12" height="16"><use href="#imicw"/></svg></div>
    <div class="abs row" style="top:154px"><svg class="ic wp" width="13" height="14"><use href="#iuser"/></svg><svg class="ph" width="7.500" height="10.500"><use href="#iphone"/></svg><span class="nm"><span class="fa" id="n2" style="width:69px;transform:scaleX(0.740)">دانشجو بهاره پورجم</span>&lrm;<span class="num">(98220028184005)</span></span></div>
    <div class="abs row alt" style="top:176px"><svg class="ic wp" width="13" height="14"><use href="#iuser"/></svg><svg class="ph" width="7.500" height="10.500"><use href="#iphone"/></svg><span class="nm"><span class="fa" id="n3" style="width:59px;transform:scaleX(0.711)">دانشجو بیتا قنبری</span>&lrm;<span class="num">(99111028332016)</span></span></div>
    <div class="abs row blue" style="top:198px"><svg class="ic" width="13" height="14"><use href="#iuser"/></svg><span class="nm"><span class="fa" id="n4" style="width:65px;transform:scaleX(0.722)">دانشجو ربابه قنبری</span>&lrm;<span class="num">(98121028184011)</span></span><svg class="mc" width="12" height="16"><use href="#imic"/></svg></div>
    <div class="abs row alt" style="top:220px"><svg class="ic wp" width="13" height="14"><use href="#iuser"/></svg><svg class="ph" width="7.500" height="10.500"><use href="#iphone"/></svg><span class="nm"><span class="fa" id="n5" style="width:72.5px;transform:scaleX(0.720)">دانشجو زهرا جعفرپور</span>&lrm;<span class="num">(99110028332006)</span></span></div>
    <div class="abs row blue" style="top:242px"><svg class="ic" width="13" height="14"><use href="#iuser"/></svg><span class="nm"><span class="fa" id="n6" style="width:55px;transform:scaleX(0.706)">دانشجو سارا ازاد</span>&lrm;<span class="num">(97211028166002)</span></span></div>
    <div class="abs row blue alt" style="top:264px"><svg class="ic" width="13" height="14"><use href="#iuser"/></svg><span class="nm"><span class="fa" id="n7" style="width:69px;transform:scaleX(0.742)">دانشجو سحر رضایی</span>&lrm;<span class="num">(98121028184008)</span></span><svg class="mc" width="12" height="16"><use href="#imic"/></svg></div>
    <div class="abs row" style="top:286px"><svg class="ic wp" width="13" height="14"><use href="#iuser"/></svg><svg class="ph" width="7.500" height="10.500"><use href="#iphone"/></svg><span class="nm"><span class="fa" id="n8" style="width:65.6px;transform:scaleX(0.706)">دانشجو شیرین الشه</span>&lrm;<span class="num">(98121028184001)</span></span></div>
    <div class="abs row alt" style="top:308px"><svg class="ic wp" width="13" height="14"><use href="#iuser"/></svg><svg class="ph" width="7.500" height="10.500"><use href="#iphone"/></svg><span class="nm"><span class="fa" id="n9" style="width:81.6px;transform:scaleX(0.724)">دانشجو عسل قرضی پور</span>&lrm;<span class="num">(98121028184010)</span></span></div>
  </div>
  <div class="abs" style="left:298px;top:84px;width:15px;height:323px;background:linear-gradient(90deg,#fdfdfd,#ececec);border-left:1px solid #8a8a8a"></div>
  <div class="abs" style="left:299px;top:265px;width:14px;height:142px;background:#c9c9c9;border-top:1px solid #9a9a9a"></div>
  <div class="abs" style="left:304px;top:171px;width:4px;height:1px;background:#333;box-shadow:0 2px 0 #333,0 4px 0 #333"></div>
</div>

<div class="abs" style="left:965px;top:511px;width:315px;height:213px;background:#000"></div>
<div id="chatpod" class="abs pod" style="left:966px;top:512px;width:313px;height:211px;border:none">
  <div class="abs podhead"><div class="abs pt"><span class="sx" id="ch1" style="transform:scaleX(.932)">Chat</span></div><div class="abs pc" style="left:43px"><span class="sx" id="ch2" style="transform:scaleX(0.93)">(Everyone)</span></div>
    <svg class="abs podmenu" style="left:282px"><use href="#ipodmenu"/></svg></div>
  <div class="abs" style="left:0;top:31px;width:298px;height:125px;background:#f3f3f3"></div>
  <div class="abs chat" style="top:39px;font-size:11px"><span class="sx" id="c0" style="transform:scaleX(1)">kar ro fix kardin dookhtesh be che storate?</span></div>
  <div class="abs chat" style="top:60px"><b><span class="fa" id="c1" style="width:64.3px;transform:scaleX(0.825)">دانشجو سارا ازاد</span>&lrm;<span class="num">(97211028166002):</span></b>&lrm;<span class="fa" id="c2" style="width:80px;transform:scaleX(1.010)">متضاد؟ ی دوتا پارچه</span></div>
  <div class="abs chat" style="top:82px"><b><span class="fa" id="c3" style="width:73.7px;transform:scaleX(0.773)">دانشجو فاطمه جعفر</span>&lrm;<span class="num">(97221028184003):</span></b>&lrm;<span class="fa" id="c4" style="width:109.8px;transform:scaleX(1.032)">شه استاد؟یت هم میسو یرو</span></div>
  <div class="abs chat" style="top:104px"><b><span class="fa" id="c5" style="width:73.7px;transform:scaleX(0.773)">دانشجو فاطمه جعفر</span>&lrm;<span class="num">(97221028184003):</span></b>&lrm;<span class="fa" id="c6" style="width:109.8px;transform:scaleX(1.037)">م قطع و وصلیف یچون صدا</span></div>
  <div class="abs chat" style="top:119px"><span class="fa" id="c7" style="width:29.8px;transform:scaleX(0.952)">شدیل م</span></div>
  <div class="abs chat" style="top:138px;font-style:italic;color:#555"><span class="fa" id="c8" style="width:76.8px;transform:scaleX(0.957)">دانشجو سحر رضایی</span>&lrm;<span class="num" id="typ">(98121028184008) is typing...</span></div>
  <div class="abs" style="left:298px;top:31px;width:15px;height:125px;background:#cbcbcb;border-left:1px solid #8a8a8a"></div>
  <div class="abs" style="left:299px;top:145px;width:14px;height:11px;background:#f4f4f4;border-top:1px solid #8a8a8a"></div>
  <div class="abs" style="left:304px;top:148px;width:4px;height:1px;background:#333;box-shadow:0 2px 0 #333,0 4px 0 #333"></div>
  <div class="abs" style="left:0;top:156px;width:313px;height:32px;background:#e4e4e4;border-top:1px solid #8a8a8a"></div>
  <div class="abs" style="left:8px;top:160px;width:264px;height:24px;background:#fff;border:1px solid #8f8f8f;border-radius:3px;box-shadow:inset 0 1px 2px rgba(0,0,0,.2)"></div>
  <div class="abs" style="left:275px;top:160px;width:30px;height:23px;border:1px solid #8f8f8f;border-radius:3px;background:linear-gradient(#fafafa,#dcdcdc)"><svg width="28" height="21" viewBox="0 0 28 21"><ellipse cx="14.500" cy="9" rx="7" ry="4.800" fill="#b8b8b8" stroke="#666" stroke-width="1"/><path d="M9.500,12 L8,16 L13,13.500" fill="#b8b8b8" stroke="#666" stroke-width="1"/></svg></div>
  <div class="abs" style="left:0;top:188px;width:313px;height:24px;background:repeating-linear-gradient(135deg,#dcdcdc 0 2px,#c8c8c8 2px 4px);border-top:1px solid #8a8a8a"></div>
  <div class="abs" style="left:0;top:189px;width:62px;height:23px;background:linear-gradient(#f6f6f6,#e2e2e2);border-right:1px solid #8a8a8a;font-size:12.500px;color:#222;padding:4px 0 0 7px"><span class="sx" id="evr" style="transform:scaleX(0.86)">Everyone</span></div>
</div>

<div id="rightbar" class="abs">
  <div class="abs hd"></div>
  <svg class="abs" style="left:7px;top:3px" width="16" height="9" viewBox="0 0 16 9"><path d="M0,.5 H9 M0,3 H9 M0,5.500 H9 M0,8 H9" stroke="#cfcfcf" stroke-width="1"/><path d="M10.500,4 L15,4 L12.700,6.500 Z" fill="#cfcfcf"/></svg>
  <svg class="abs" style="left:62px;top:3px" width="9" height="9" viewBox="0 0 9 9"><path d="M1,1 L8,8 M8,1 L1,8" stroke="#d8d8d8" stroke-width="2"/></svg>
  <div class="abs lay" style="top:24px;left:8px;width:59px;height:42px;border:2px solid #2b83ee;background:#5b8fd2;box-shadow:0 0 2px #2b83ee">
    <i style="left:0;top:0;width:55px;height:3px;background:#46689a"></i><i style="left:47px;top:1px;width:6px;height:1px;background:#e8c860"></i>
    <i style="left:2px;top:5px;width:37px;height:31px;background:#6c9ad8;border:1px solid #8fb4e6"></i><i style="left:42px;top:5px;width:11px;height:19px;background:#6c9ad8;border:1px solid #8fb4e6"></i><i style="left:42px;top:27px;width:11px;height:9px;background:#6c9ad8;border:1px solid #8fb4e6"></i>
  </div>
  <div class="abs laylbl" style="top:71px;text-align:left;left:11px"><span class="sx" id="l1" style="transform:scaleX(.93)">Sharing</span></div>
  <div class="abs lay" style="top:98px">
    <i style="left:0;top:0;width:55px;height:3px;background:#3a3a3a"></i><i style="left:47px;top:1px;width:6px;height:1px;background:#e8c860"></i>
    <i style="left:2px;top:5px;width:37px;height:15px"></i><i style="left:42px;top:5px;width:11px;height:15px"></i><i style="left:2px;top:23px;width:17px;height:11px"></i><i style="left:22px;top:23px;width:17px;height:11px"></i><i style="left:42px;top:23px;width:11px;height:11px"></i>
  </div>
  <div class="abs laylbl" style="top:143px;text-align:left;left:11px"><span class="sx" id="l2" style="transform:scaleX(0.897)">Discussion</span></div>
  <div class="abs lay" style="top:171px">
    <i style="left:0;top:0;width:55px;height:3px;background:#3a3a3a"></i><i style="left:47px;top:1px;width:6px;height:1px;background:#e8c860"></i>
    <i style="left:2px;top:5px;width:37px;height:17px"></i><i style="left:42px;top:5px;width:11px;height:7px"></i><i style="left:42px;top:14px;width:11px;height:8px"></i><i style="left:2px;top:25px;width:17px;height:9px"></i><i style="left:22px;top:25px;width:17px;height:9px"></i><i style="left:42px;top:25px;width:11px;height:9px"></i>
  </div>
  <div class="abs laylbl" style="top:216px;text-align:left;left:11px"><span class="sx" id="l3" style="transform:scaleX(0.871)">Collabo...</span></div>
  <svg class="abs" style="left:12px;top:635px" width="54" height="18" viewBox="0 0 54 18"><g fill="#c6c6c6" stroke="none"><path d="M1.500,2.500 C1.500,1 3,.3 4.500,.8 L3.500,2.800 L5.200,4.500 L7.200,3.500 C7.700,5 7,6.500 5.500,6.500 L15.500,13.500 C16.500,14.500 16.500,15.500 15.800,16.200 C15,17 14,16.800 13.300,16 L4,7.500 C2.500,7.500 1.500,6 1.500,2.500 Z"/><path d="M11,4.500 L14.500,.8 L17,3.200 L13.300,6.800 Z"/><path d="M9.800,7.500 L11.200,8.800 L3.200,15.800 L.8,16.800 L1.800,14.500 Z"/></g><path d="M36,9 H51 M43.500,1.500 V16.500" stroke="#c6c6c6" stroke-width="3.300"/></svg>
</div>

</body>
</html>
